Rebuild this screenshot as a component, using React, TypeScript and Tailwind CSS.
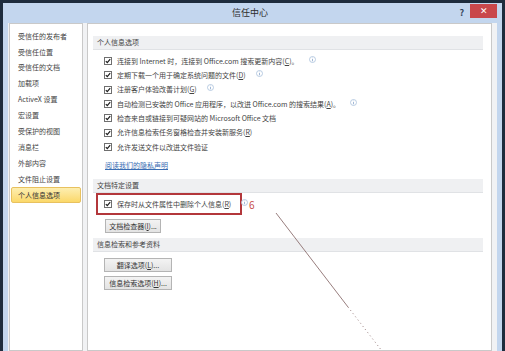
const navItems = ["受信任的发布者", "受信任位置", "受信任的文档", "加载项", "ActiveX 设置", "宏设置", "受保护的视图", "消息栏", "外部内容", "文件阻止设置", "个人信息选项"];

const rows: { pre: string; key?: string; post?: string; info?: boolean }[] = [
    { pre: "连接到 Internet 时，连接到 Office.com 搜索更新内容(", key: "C", post: ")。", info: true },
    { pre: "定期下载一个用于确定系统问题的文件(", key: "D", post: ")", info: true },
    { pre: "注册客户体验改善计划(", key: "G", post: ")", info: true },
    { pre: "自动检测已安装的 Office 应用程序，以改进 Office.com 的搜索结果(", key: "A", post: ")。", info: true },
    { pre: "检查来自或链接到可疑网站的 Microsoft Office 文档" },
    { pre: "允许信息检索任务窗格检查并安装新服务(", key: "R", post: ")" },
    { pre: "允许发送文件以改进文件验证" },
];

const CheckBox = () => (
    <svg width="8" height="8" viewBox="0 0 8 8" className="shrink-0">
        <rect x="0.5" y="0.5" width="7" height="7" fill="#fff" stroke="#6f6f6f" />
        <path d="M1.8 4.1 L3.3 5.7 L6.2 2.1" fill="none" stroke="#1e1e1e" strokeWidth="1.2" />
    </svg>
);

const Info = () => (
    <svg width="7" height="7" viewBox="0 0 7 7" className="ml-[5px] shrink-0 -translate-y-[2px]">
        <circle cx="3.5" cy="3.5" r="3" fill="#fff" stroke="#a8bfdc" strokeWidth="0.8" />
        <path d="M3.5 3 V5.3 M3.5 1.7 V2.2" stroke="#8aa6cc" strokeWidth="0.8" />
    </svg>
);

const Band = ({ text }: { text: string }) => (
    <div className="h-[14px] flex items-center pl-[4px] bg-[#eff0f2] border-b border-[#e0e2e5]">{text}</div>
);

const Btn = ({ label, k, w }: { label: string; k: string; w: string }) => (
    <div className={`h-[14px] ${w} flex items-center justify-center border border-[#b4b4b4] bg-gradient-to-b from-[#f3f3f3] to-[#e3e3e3] text-[#333]`}>
        {label}(<u>{k}</u>)...
    </div>
);

export default function App() {
    return (
        <div className="relative w-[505px] h-[351px] overflow-hidden bg-[#1e2c3d] pt-[3px] px-[3px] font-['Noto_Sans_CJK_SC',sans-serif] text-[#444]">
            <div className="flex flex-col h-full bg-[#c3d6ee]">
                <div className="flex h-[20px] shrink-0">
                    <div className="flex-1" />
                    <div className="flex items-center text-[9px] text-[#2d2d2d]">信任中心</div>
                    <div className="flex-1 flex justify-end items-start pt-[1px] pr-[5px]">
                        <div className="mr-[6px] mt-[2px] text-[9px] font-bold text-[#34465c]">?</div>
                        <div className="w-[27px] h-[14px] bg-[#c9474b] flex items-center justify-center text-white text-[9px]">✕</div>
                    </div>
                </div>
                <div className="flex flex-1 mx-[5px] bg-[#f1f2f4] pl-[1px] pr-[5px] gap-[4px] text-[7px]">
                    <div className="w-[74px] bg-white border border-[#c9c9c9] pt-[4px]">
                        {navItems.map((n, i) => (
                            <div
                                key={n}
                                className={`h-[15.9px] mx-[1px] px-[6px] flex items-center rounded-[2px] border ${i === navItems.length - 1 ? "bg-gradient-to-b from-[#fdeeb0] to-[#fbd868] border-[#e8c15f] text-[#333]" : "border-transparent"}`}
                            >
                                {n}
                            </div>
                        ))}
                    </div>
                    <div className="w-[405px] bg-white border border-[#c9c9c9] pt-[12px] pl-[5px] pr-[8px]">
                        <Band text="个人信息选项" />
                        <div className="mt-[4px] pl-[11px]">
                            {rows.map((r) => (
                                <div key={r.pre} className="h-[14.3px] flex items-center gap-[5px]">
                                    <CheckBox />
                                    <span className="whitespace-nowrap">
                                        {r.pre}
                                        {r.key && <u>{r.key}</u>}
                                        {r.post}
                                    </span>
                                    {r.info && <Info />}
                                </div>
                            ))}
                        </div>
                        <div className="mt-[4px] h-[14px] pl-[12px] flex items-center">
                            <span className="text-[#3a6db3] underline">阅读我们的隐私声明</span>
                        </div>
                        <div className="mt-[7px]">
                            <Band text="文档特定设置" />
                        </div>
                        <div className="flex items-center">
                            <div className="ml-[3px] w-[146px] h-[22px] border-2 border-[#b3373b] pl-[6px] flex items-center gap-[5px]">
                                <CheckBox />
                                <span className="whitespace-nowrap">
                                    保存时从文件属性中删除个人信息(<u>R</u>)
                                </span>
                                <Info />
                            </div>
                            <div className="ml-[7px] text-[10px] text-[#c9504c]">6</div>
                        </div>
                        <div className="mt-[4px] ml-[12px]">
                            <Btn label="文档检查器" k="I" w="w-[56px]" />
                        </div>
                        <div className="mt-[5px]">
                            <Band text="信息检索和参考资料" />
                        </div>
                        <div className="mt-[6px] ml-[11px] flex flex-col gap-[4px]">
                            <Btn label="翻译选项" k="L" w="w-[68px]" />
                            <Btn label="信息检索选项" k="H" w="w-[68px]" />
                        </div>
                    </div>
                </div>
            </div>
            <svg className="absolute inset-0 pointer-events-none" width="505" height="351">
                <line x1="276" y1="213" x2="348" y2="307" stroke="#8c6f6f" strokeWidth="0.9" />
                <line x1="348" y1="307" x2="382" y2="351" stroke="#8c6f6f" strokeWidth="0.9" strokeDasharray="1 3" />
            </svg>
        </div>
    );
}
